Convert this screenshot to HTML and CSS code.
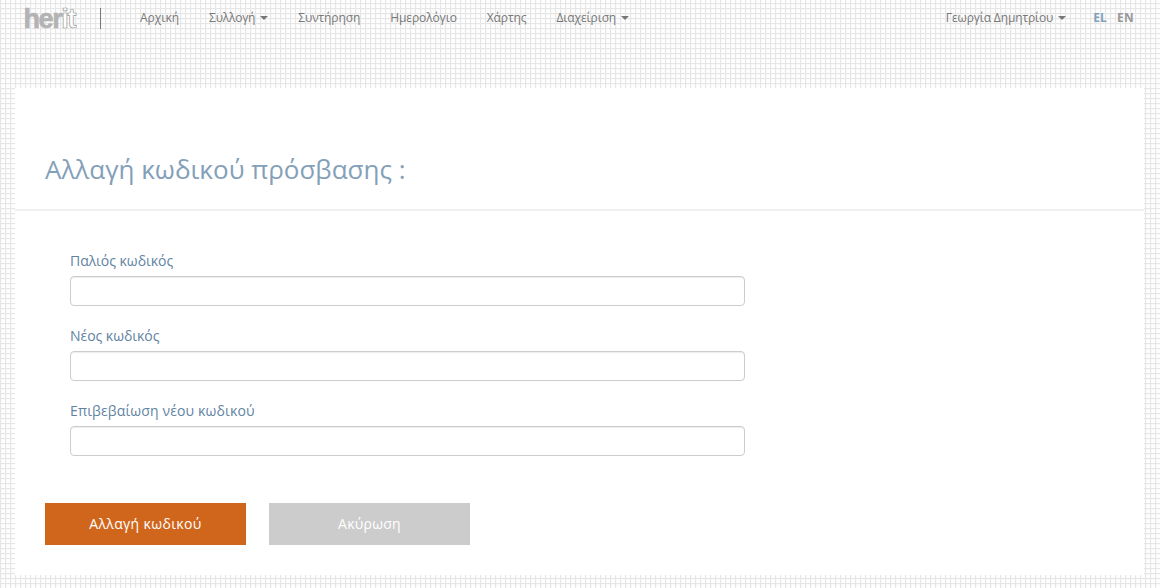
FILE: index.html
```html
<!DOCTYPE html>
<html lang="el">
<head>
<meta charset="utf-8">
<title>herit</title>
<link rel="stylesheet" href="styles.css">
</head>
<body>
<header class="navbar">
  <a class="logo"><span class="logo-solid">her</span><span class="logo-outline">it</span></a>
  <nav class="menu">
    <a>Αρχική</a>
    <a class="snug">Συλλογή<span class="caret"></span></a>
    <a class="tight">Συντήρηση</a>
    <a class="tight">Ημερολόγιο</a>
    <a class="tight">Χάρτης</a>
    <a class="tight">Διαχείριση<span class="caret"></span></a>
  </nav>
  <a class="user tight">Γεωργία Δημητρίου<span class="caret"></span></a>
  <div class="langs"><a class="lang active">EL</a><a class="lang">EN</a></div>
</header>
<main class="panel">
  <h1 class="title">Αλλαγή κωδικού πρόσβασης :</h1>
  <form>
    <div class="fields">
      <label class="label" for="old">Παλιός κωδικός</label>
      <input class="input" id="old" type="password">
      <label class="label" for="new">Νέος κωδικός</label>
      <input class="input" id="new" type="password">
      <label class="label wide" for="confirm">Επιβεβαίωση νέου κωδικού</label>
      <input class="input" id="confirm" type="password">
    </div>
    <div class="actions">
      <button class="btn primary" type="button">Αλλαγή κωδικού</button>
      <button class="btn" type="button">Ακύρωση</button>
    </div>
  </form>
</main>
</body>
</html>
```
FILE: styles.css
```css
* { box-sizing: border-box; }
html { height: 100%; }
body {
  margin: 0;
  height: 588px;
  overflow: hidden;
  font-family: "Open Sans", sans-serif;
  background-color: #fefefe;
  background-image:
    linear-gradient(to right, #e6e6e6 1px, transparent 1px),
    linear-gradient(to bottom, #e6e6e6 1px, transparent 1px),
    linear-gradient(to right, #fafafa 2px, transparent 2px),
    linear-gradient(to bottom, #fafafa 2px, transparent 2px);
  background-size: 5px 5px;
  background-position: 0 0, 0 3px, 0 0, 0 3px;
}
.navbar {
  display: flex;
  height: 88px;
  padding: 8px 26px 0 25px;
  font-size: 12px;
  line-height: 20px;
  color: #777;
}
.logo {
  width: 76px;
  height: 21px;
  border-right: 1px solid #777;
  font: bold 27px/23px "Liberation Sans", sans-serif;
  letter-spacing: -1.4px;
  text-indent: -1.5px;
  color: #b3b3b3;
  white-space: nowrap;
}
.logo-solid { -webkit-text-stroke: 0.6px #b3b3b3; }
.logo-outline { color: #fff; -webkit-text-stroke: 0.7px #999; }
.menu { display: flex; gap: 30px; margin-left: 39px; }
.tight { letter-spacing: -.1px; }
.snug { letter-spacing: -.22px; }
.caret {
  display: inline-block;
  margin-left: 5px;
  vertical-align: 2px;
  border-top: 4px solid #777;
  border-left: 4px solid transparent;
  border-right: 4px solid transparent;
}
.user { margin-left: auto; }
.user.tight { letter-spacing: -.14px; }
.langs { display: flex; gap: 10px; margin-left: 27px; font-weight: bold; }
.lang { color: #999; letter-spacing: .2px; }
.lang.active { color: #7f9fb9; }
.panel {
  width: 1129px;
  height: 487px;
  margin-left: 15px;
  padding-top: 62px;
  background: #fff;
}
.title {
  height: 61px;
  margin: 0;
  padding-left: 30px;
  border-bottom: 2px solid #f0f0f0;
  font-size: 26px;
  font-weight: 400;
  line-height: 39px;
  color: #84a0b9;
}
.fields { width: 730px; padding: 40px 0 0 55px; }
.label {
  display: block;
  height: 25px;
  font-size: 14px;
  line-height: 20px;
  letter-spacing: -.04px;
  color: #5f84a2;
}
.label.wide { letter-spacing: .14px; }
.input {
  display: block;
  width: 675px;
  height: 30px;
  margin-bottom: 20px;
  border: 1px solid #ccc;
  border-radius: 4px;
  background: #fff;
  box-shadow: inset 0 1px 1px rgba(0, 0, 0, .075);
}
.actions { display: flex; gap: 23px; padding: 27px 0 0 30px; }
.btn {
  width: 201px;
  height: 42px;
  padding: 0;
  border: 0;
  background: #ccc;
  color: #fff;
  font: 14px/20px "Open Sans", sans-serif;
  letter-spacing: .25px;
}
.btn.primary { background: #d0661c; letter-spacing: .35px; }
```
